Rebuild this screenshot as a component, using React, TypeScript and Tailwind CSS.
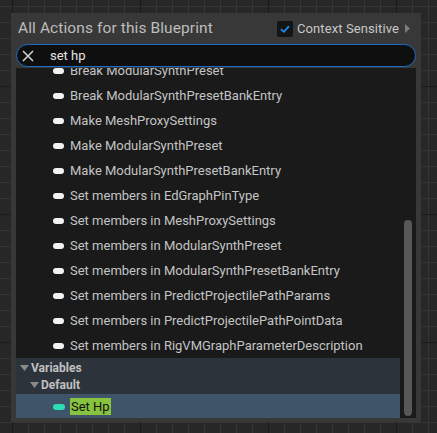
import React from 'react';

const actions = [
  'Break ModularSynthPreset',
  'Break ModularSynthPresetBankEntry',
  'Make MeshProxySettings',
  'Make ModularSynthPreset',
  'Make ModularSynthPresetBankEntry',
  'Set members in EdGraphPinType',
  'Set members in MeshProxySettings',
  'Set members in ModularSynthPreset',
  'Set members in ModularSynthPresetBankEntry',
  'Set members in PredictProjectilePathParams',
  'Set members in PredictProjectilePathPointData',
  'Set members in RigVMGraphParameterDescription',
];

const Caret = () => (
  <svg width="9" height="6" viewBox="0 0 9 6" className="shrink-0">
    <path d="M0 0 L9 0 L4.5 6 Z" fill="#8a8a8a" />
  </svg>
);

export default function App() {
  return (
    <div
      className="w-[437px] h-[433px] bg-[#272727] overflow-hidden bg-[image:linear-gradient(#1b1b1b_1px,transparent_1px),linear-gradient(90deg,#1b1b1b_1px,transparent_1px),linear-gradient(#353535_1px,transparent_1px),linear-gradient(90deg,#353535_1px,transparent_1px)] bg-[size:128px_128px,128px_128px,16px_16px,16px_16px] bg-[position:12px_86px,12px_86px,12px_6px,12px_6px] pt-[13px] pl-[11px]"
      style={{ fontFamily: 'Roboto, "Noto Sans", sans-serif' }}
    >
      <div className="w-[410px] h-[409px] bg-[#383838] flex flex-col px-[5px] pb-[4px]">
        {/* header */}
        <div className="h-[31px] flex items-center justify-between pl-[2px] pr-[6px]">
          <span className="text-[15.5px] text-[#bdbdbd] tracking-[0.1px]">All Actions for this Blueprint</span>
          <div className="flex items-center">
            <div className="w-[16px] h-[16px] rounded-[2px] bg-[#141414] flex items-center justify-center">
              <svg width="10" height="8" viewBox="0 0 10 8">
                <path d="M1 4.2 L3.8 6.8 L9 1.2" stroke="#1b8cf0" strokeWidth="1.8" fill="none" />
              </svg>
            </div>
            <span className="ml-[4px] text-[13px] text-[#c8c8c8] tracking-[0.1px]">Context Sensitive</span>
            <svg width="5" height="9" viewBox="0 0 5 9" className="ml-[6px]">
              <path d="M0 0 L5 4.5 L0 9 Z" fill="#7d7d7d" />
            </svg>
          </div>
        </div>

        {/* search */}
        <div className="h-[23px] rounded-full border-[1.5px] border-[#1d6bc8] bg-[#0f0f0f] flex items-center pl-[5px]">
          <svg width="12" height="12" viewBox="0 0 12 12">
            <path d="M1 1 L11 11 M11 1 L1 11" stroke="#d0d0d0" strokeWidth="1.6" />
          </svg>
          <span className="ml-[16px] text-[13px] text-[#e6e6e6]">set hp</span>
        </div>

        {/* list */}
        <div className="relative flex-1 bg-[#1a1a1a] overflow-hidden mt-[1px]">
          <div className="mr-[16px] -mt-[10px]">
            {actions.map((a) => (
              <div key={a} className="h-[25px] flex items-center pl-[37px]">
                <span className="w-[11px] h-[6px] rounded-full bg-[#f2f2f2]" />
                <span className="ml-[6px] text-[13px] text-[#c4c4c4]">{a}</span>
              </div>
            ))}
            <div className="bg-[#2c333b] pt-[1px]">
              <div className="h-[17px] flex items-center pl-[4px] gap-[2px]">
                <Caret />
                <span className="text-[12px] font-bold text-[#c0c0c0]">Variables</span>
              </div>
              <div className="h-[18px] flex items-center pl-[14px] gap-[2px]">
                <Caret />
                <span className="text-[12px] font-bold text-[#c0c0c0]">Default</span>
              </div>
            </div>
            <div className="h-[25px] bg-[#3f5369] flex items-center pl-[37px]">
              <span className="w-[12px] h-[6px] rounded-full bg-[#2cdcb2]" />
              <span className="ml-[5px] text-[13px] text-[#111] bg-[#87c33f] px-[1px] leading-[17px]">Set Hp</span>
            </div>
          </div>
          <div className="absolute top-0 bottom-0 right-0 w-[16px] bg-[#1a1a1a] flex flex-col justify-end pb-[2px] px-[4px]">
            <div className="h-[196px] rounded-full bg-[#585858]" />
          </div>
        </div>
      </div>
    </div>
  );
}
